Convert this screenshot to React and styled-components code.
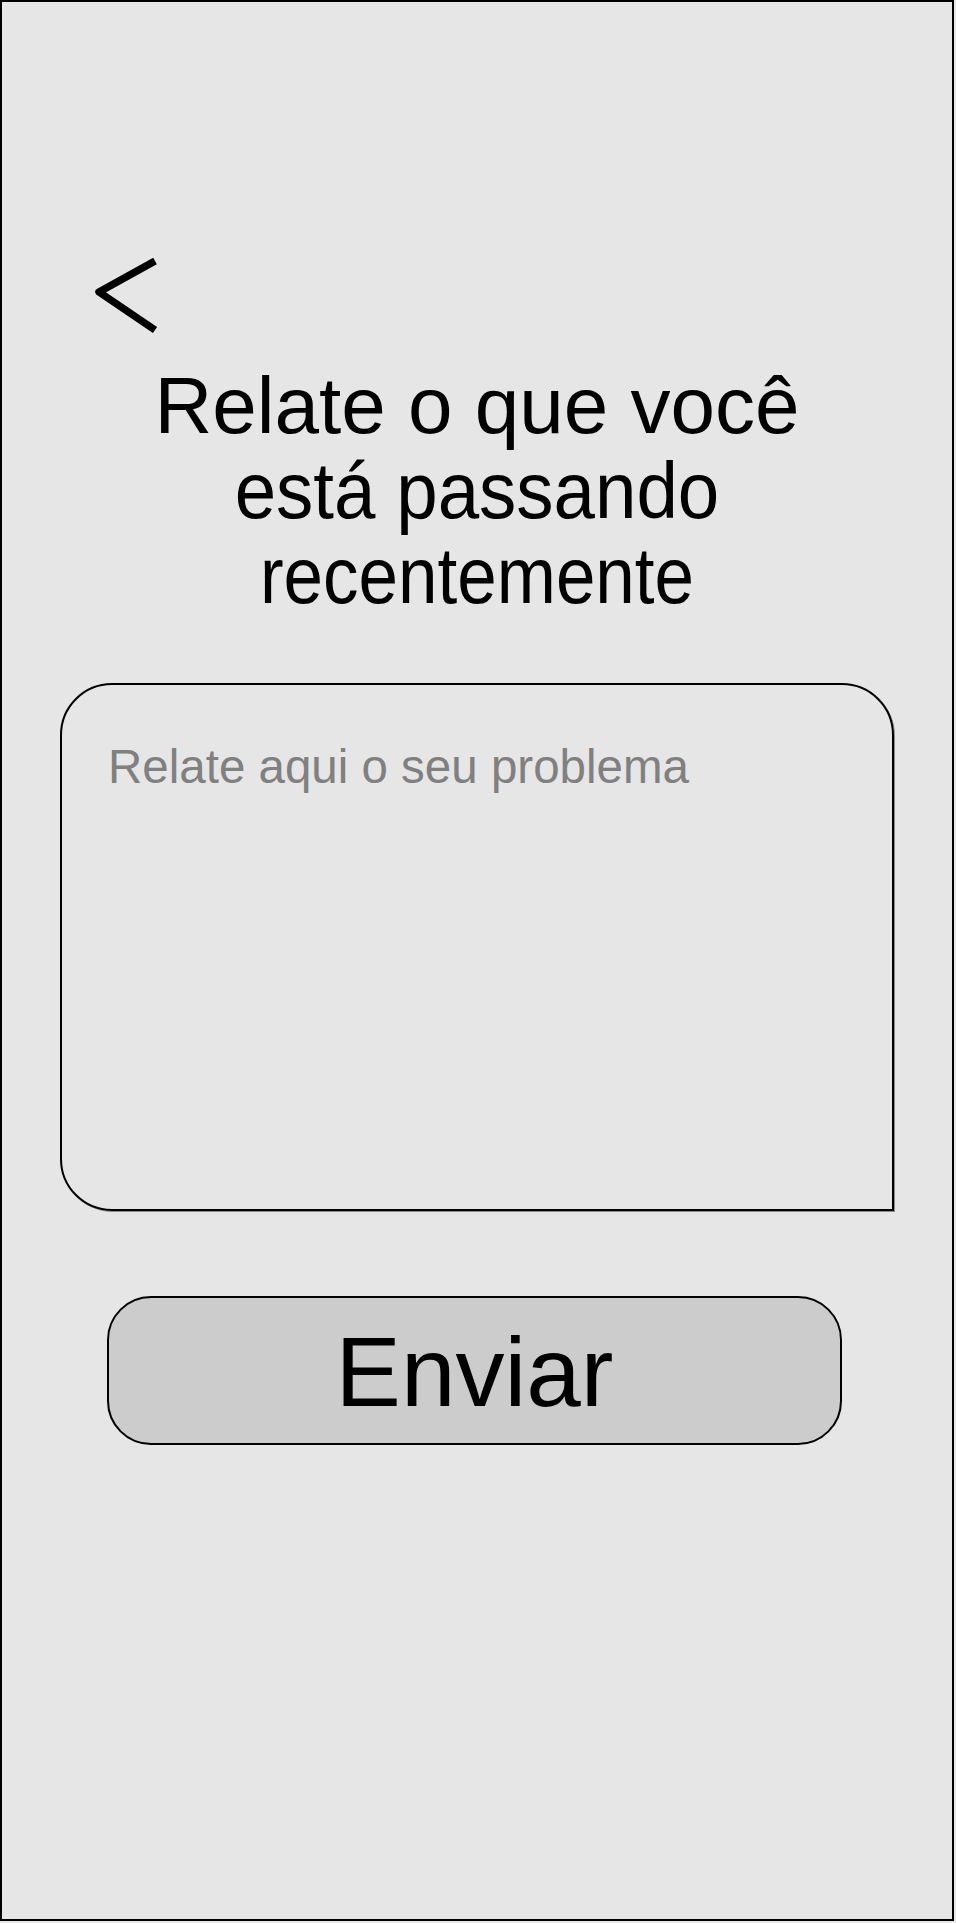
import React, { useState } from "react";
import styled, { createGlobalStyle } from "styled-components";

const GlobalStyle = createGlobalStyle`
    html, body {
        margin: 0;
        padding: 0;
        background-color: #e6e6e6;
        font-family: "Liberation Sans", Arial, sans-serif;
    }
`

const Screen = styled.div`
    box-sizing: border-box;
    width: 954px;
    height: 1921px;
    border: 2px solid #000;
    background-color: #e6e6e6;
    padding: 252px 58px 0;
    display: flex;
    flex-direction: column;
`

const BackButton = styled.button`
    align-self: flex-start;
    margin: 0 0 0 30px;
    padding: 0;
    border: none;
    background: none;
    cursor: pointer;
    display: block;
    line-height: 0;

    svg {
        display: block;
    }
`

const Title = styled.h1`
    margin: 27px 0 0;
    font-size: 80px;
    font-weight: 400;
    line-height: 86.5px;
    text-align: center;
    color: #000;
`

// the mockup draws the shorter lines narrower but just as tall
const TitleLine = styled.span`
    display: block;
    font-size: ${(p) => p.$size || 80}px;
    transform: scaleY(${(p) => p.$stretch || 1});
    transform-origin: 50% 68px;
`

const Report = styled.textarea`
    box-sizing: border-box;
    margin: 60px 0 0;
    height: 528px;
    width: 100%;
    border: 2px solid #000;
    border-radius: 52px 52px 0 52px;
    box-shadow: 1px 1px 0 #8a8a8a;
    background: transparent;
    padding: 54px 40px 0 46px;
    font-family: "Liberation Sans", Arial, sans-serif;
    font-size: 47.5px;
    line-height: 55px;
    color: #000;
    resize: none;
    outline: none;

    &::placeholder {
        color: #808080;
    }
`

const SendButton = styled.button`
    box-sizing: border-box;
    margin: 85px 0 0 47px;
    width: 735px;
    height: 149px;
    border: 2px solid #000;
    border-radius: 44px;
    background-color: #cccccc;
    display: flex;
    align-items: center;
    justify-content: center;
    padding: 3px 0 0;
    font-family: "Liberation Sans", Arial, sans-serif;
    font-size: 98px;
    line-height: 1;
    color: #000;
    cursor: pointer;
`

const Chevron = () => (
    <svg width="70" height="82" viewBox="0 0 70 82">
        <polyline
            points="65,7 9,38 65,76"
            fill="none"
            stroke="#000"
            strokeWidth="7.5"
            strokeLinejoin="round"
        />
    </svg>
)

const App = () => {
    const [text, setText] = useState("")

    return (
        <>
            <GlobalStyle />
            <Screen>
                <BackButton aria-label="Voltar">
                    <Chevron />
                </BackButton>
                <Title>
                    <TitleLine>Relate o que você</TitleLine>
                    <TitleLine $size={74.5} $stretch={1.07}>está passando</TitleLine>
                    <TitleLine $size={71} $stretch={1.12}>recentemente</TitleLine>
                </Title>
                <Report
                    value={text}
                    onChange={(e) => setText(e.target.value)}
                    placeholder="Relate aqui o seu problema"
                />
                <SendButton>Enviar</SendButton>
            </Screen>
        </>
    )
}

export default App;
